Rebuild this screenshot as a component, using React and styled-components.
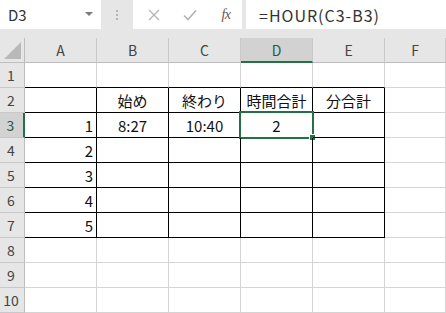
import React from "react";
import styled, { createGlobalStyle } from "styled-components";

const GlobalStyle = createGlobalStyle`
  html, body {
    margin: 0;
    padding: 0;
    background: #ffffff;
    overflow: hidden;
  }
  body {
    font-family: "Noto Sans CJK JP", "Noto Sans", sans-serif;
  }
`;

const GREEN = "#217346";
const GRID = "#d4d4d4";

const Sheet = styled.div`
  width: 446px;
  height: 313px;
  background: #e6e6e6;
  display: flex;
  flex-direction: column;
`;

const Toolbar = styled.div`
  height: 40px;
  display: flex;
  align-items: flex-start;
`;

const NameBox = styled.div`
  width: 101px;
  height: 29px;
  background: #fff;
  display: flex;
  align-items: center;
  justify-content: space-between;
  padding: 0 8px 0 8px;
  box-sizing: border-box;
  font-size: 15px;
  color: #333;
`;

const Caret = styled.span`
  width: 0;
  height: 0;
  border-left: 4px solid transparent;
  border-right: 4px solid transparent;
  border-top: 4px solid #7a7a7a;
  margin-top: -2px;
`;

const Dots = styled.div`
  width: 32px;
  height: 29px;
  display: flex;
  flex-direction: column;
  align-items: center;
  justify-content: center;
  gap: 2px;
  span {
    width: 2px;
    height: 2px;
    background: #b4b4b4;
  }
`;

const ButtonBox = styled.div`
  width: 109px;
  height: 29px;
  background: #fff;
  display: flex;
  align-items: center;
  padding-left: 12px;
  box-sizing: border-box;
  gap: 18px;
`;

const IconSlot = styled.div`
  width: 18px;
  display: flex;
  justify-content: center;
  align-items: center;
`;

const Fx = styled.span`
  font-family: "Liberation Serif", "DejaVu Serif", serif;
  font-style: italic;
  font-size: 14px;
  color: #5a5a5a;
  letter-spacing: -0.5px;
`;

const FormulaBox = styled.div`
  flex: 1;
  margin-left: 4px;
  height: 29px;
  background: #fff;
  display: flex;
  align-items: center;
  padding-left: 13px;
  font-size: 16px;
  color: #333;
  letter-spacing: 1px;
`;

const Grid = styled.div`
  display: grid;
  grid-template-columns: 25px repeat(5, 72px) 1fr;
  grid-template-rows: 25px repeat(10, 25px);
  background: #fff;
  flex: 1;
`;

const Corner = styled.div`
  background: #e6e6e6;
  border-right: 1px solid #bdbdbd;
  border-bottom: 1px solid #bdbdbd;
  position: relative;
  &::after {
    content: "";
    position: absolute;
    right: 3px;
    bottom: 3px;
    border-left: 17px solid transparent;
    border-bottom: 17px solid #b9b9b9;
  }
`;

const ColHeader = styled.div`
  background: ${({ $active }) => ($active ? "#d2d2d2" : "#e6e6e6")};
  border-right: 1px solid #c8c8c8;
  border-bottom: ${({ $active }) => ($active ? `2px solid ${GREEN}` : "1px solid #bdbdbd")};
  display: flex;
  align-items: center;
  justify-content: center;
  font-size: 14px;
  color: ${({ $active }) => ($active ? "#1e5c3a" : "#444")};
  box-sizing: border-box;
`;

const RowHeader = styled.div`
  background: ${({ $active }) => ($active ? "#d2d2d2" : "#e6e6e6")};
  border-right: ${({ $active }) => ($active ? `2px solid ${GREEN}` : "1px solid #bdbdbd")};
  border-bottom: 1px solid #c8c8c8;
  display: flex;
  align-items: center;
  justify-content: center;
  padding-right: 2px;
  font-size: 14px;
  color: ${({ $active }) => ($active ? "#1e5c3a" : "#444")};
  box-sizing: border-box;
`;

const Cell = styled.div`
  position: relative;
  box-sizing: border-box;
  border-right: 1px solid ${({ $boxRight }) => ($boxRight ? "#000" : GRID)};
  border-bottom: 1px solid ${({ $boxBottom }) => ($boxBottom ? "#000" : GRID)};
  display: flex;
  align-items: center;
  justify-content: ${({ $align }) => ($align === "right" ? "flex-end" : "center")};
  padding: ${({ $align }) => ($align === "right" ? "1px 3px 0 0" : "1px 0 0 0")};
  font-size: 15px;
  color: #111;
`;

const ActiveFrame = styled.div`
  position: absolute;
  left: -2px;
  top: -2px;
  right: -2px;
  bottom: -2px;
  border: 2px solid ${GREEN};
  pointer-events: none;
`;

const FillHandle = styled.div`
  position: absolute;
  right: -4px;
  bottom: -4px;
  width: 5px;
  height: 5px;
  background: ${GREEN};
  border: 1px solid #fff;
`;

const columns = ["A", "B", "C", "D", "E", "F"];

const data = {
  2: { B: "始め", C: "終わり", D: "時間合計", E: "分合計" },
  3: { A: "1", B: "8:27", C: "10:40", D: "2" },
  4: { A: "2" },
  5: { A: "3" },
  6: { A: "4" },
  7: { A: "5" },
};

const CrossIcon = () => (
  <svg width="12" height="12" viewBox="0 0 12 12">
    <path d="M1 1 L11 11 M11 1 L1 11" stroke="#b3b3b3" strokeWidth="1.3" fill="none" />
  </svg>
);

const CheckIcon = () => (
  <svg width="14" height="12" viewBox="0 0 14 12">
    <path d="M1 6.5 L5 10.5 L13 1.5" stroke="#b3b3b3" strokeWidth="1.6" fill="none" />
  </svg>
);

const App = () => {
  const rows = Array.from({ length: 10 }, (_, i) => i + 1);

  return (
    <>
      <GlobalStyle />
      <Sheet>
        <Toolbar>
          <NameBox>
            D3
            <Caret />
          </NameBox>
          <Dots>
            <span />
            <span />
            <span />
          </Dots>
          <ButtonBox>
            <IconSlot>
              <CrossIcon />
            </IconSlot>
            <IconSlot>
              <CheckIcon />
            </IconSlot>
            <IconSlot>
              <Fx>fx</Fx>
            </IconSlot>
          </ButtonBox>
          <FormulaBox>=HOUR(C3-B3)</FormulaBox>
        </Toolbar>
        <Grid>
          <Corner />
          {columns.map((c) => (
            <ColHeader key={c} $active={c === "D"}>
              {c}
            </ColHeader>
          ))}
          {rows.map((r) => (
            <React.Fragment key={r}>
              <RowHeader $active={r === 3}>{r}</RowHeader>
              {columns.map((c, ci) => {
                const inTable = ci < 5;
                const boxBottom = inTable && r >= 1 && r <= 7;
                const boxRight = inTable && r >= 2 && r <= 7;
                const value = data[r] && data[r][c];
                const active = r === 3 && c === "D";
                return (
                  <Cell
                    key={c}
                    $boxRight={boxRight}
                    $boxBottom={boxBottom}
                    $align={c === "A" ? "right" : "center"}
                  >
                    {value}
                    {active && (
                      <ActiveFrame>
                        <FillHandle />
                      </ActiveFrame>
                    )}
                  </Cell>
                );
              })}
            </React.Fragment>
          ))}
        </Grid>
      </Sheet>
    </>
  );
};

export default App;
